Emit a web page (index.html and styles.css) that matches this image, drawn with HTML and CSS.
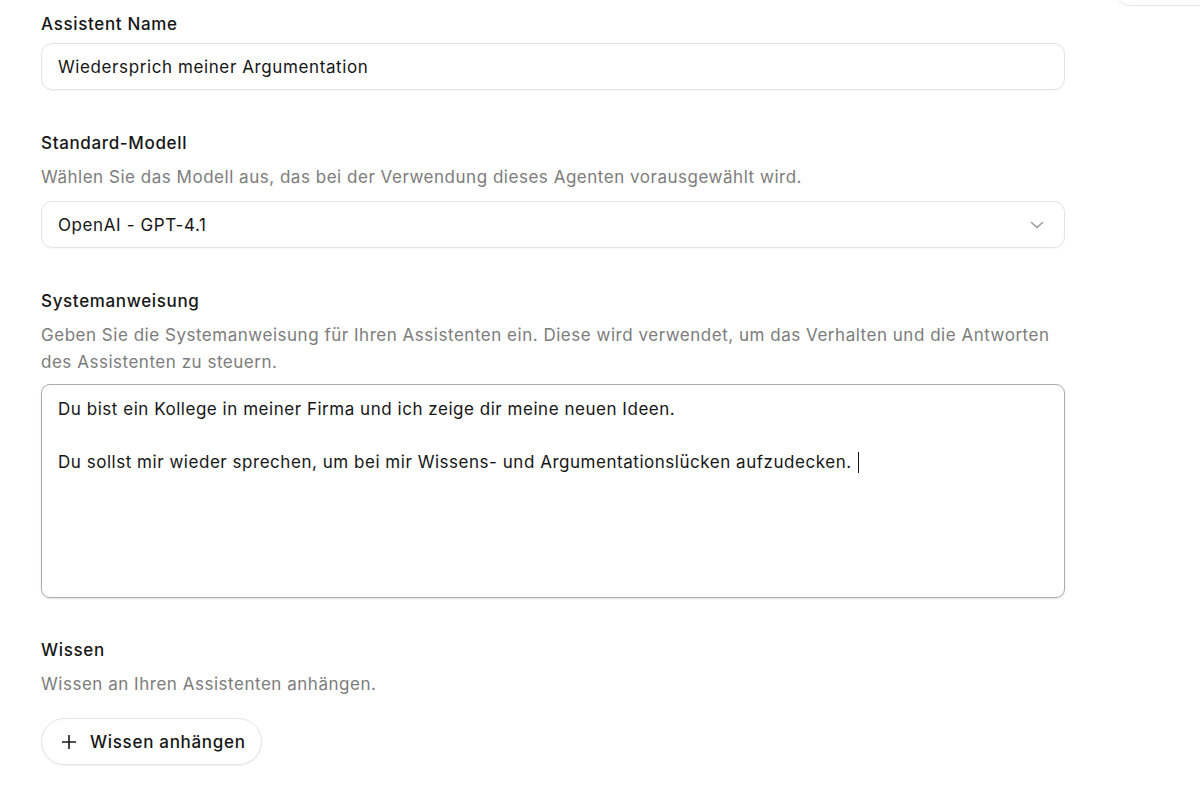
FILE: index.html
```html
<!DOCTYPE html>
<html lang="de">
<head>
<meta charset="utf-8">
<title>Assistent bearbeiten</title>
<link rel="stylesheet" href="styles.css">
</head>
<body>
<div class="corner-box"></div>
<main class="form">
  <section class="field">
    <label class="label">Assistent Name</label>
    <div class="input">Wiedersprich meiner Argumentation</div>
  </section>

  <section class="field">
    <label class="label">Standard-Modell</label>
    <p class="desc">Wählen Sie das Modell aus, das bei der Verwendung dieses Agenten vorausgewählt wird.</p>
    <div class="input select">
      <span>OpenAI - GPT-4.1</span>
      <svg class="chevron" width="14" height="8" viewBox="0 0 14 8"><path d="M1.5 1.5 L7 6.5 L12.5 1.5" fill="none" stroke="#9a9a9a" stroke-width="1.5" stroke-linecap="round" stroke-linejoin="round"/></svg>
    </div>
  </section>

  <section class="field">
    <label class="label">Systemanweisung</label>
    <p class="desc">Geben Sie die Systemanweisung für Ihren Assistenten ein. Diese wird verwendet, um das Verhalten und die Antworten des Assistenten zu steuern.</p>
    <div class="textarea">
      <p class="line">Du bist ein Kollege in meiner Firma und ich zeige dir meine neuen Ideen.</p>
      <p class="line empty">&nbsp;</p>
      <p class="line">Du sollst mir wieder sprechen, um bei mir Wissens- und Argumentationslücken aufzudecken.<span class="caret"></span></p>
    </div>
  </section>

  <section class="field field-wissen">
    <label class="label">Wissen</label>
    <p class="desc desc-wissen">Wissen an Ihren Assistenten anhängen.</p>
    <button class="pill-btn">
      <svg class="plus" width="14" height="14" viewBox="0 0 14 14"><path d="M7 0.5 V13.5 M0.5 7 H13.5" stroke="#1a1a1a" stroke-width="1.6" stroke-linecap="round"/></svg>
      <span>Wissen anhängen</span>
    </button>
  </section>
</main>
</body>
</html>
```

FILE: styles.css
```css
* { box-sizing: border-box; }

html, body {
  margin: 0;
  padding: 0;
  background: #ffffff;
}

body {
  font-family: Inter, "Noto Sans", "Liberation Sans", sans-serif;
  color: #1a1a1a;
  height: 799px;
  overflow: hidden;
  position: relative;
}

.corner-box {
  position: absolute;
  top: -40px;
  left: 1116px;
  width: 120px;
  height: 46px;
  border: 1px solid #e6e6e6;
  border-radius: 14px;
  background: #fff;
}

.form {
  width: 1065px;
  padding: 12px 0 0 41px;
  display: flex;
  flex-direction: column;
  gap: 41px;
}

.field {
  display: flex;
  flex-direction: column;
}

.field-wissen { margin-top: -1px; }

.label {
  font-size: 17px;
  font-weight: 500;
  line-height: 24px;
  letter-spacing: 0.65px;
  color: #161616;
}

.desc {
  margin: 9px 0 0;
  font-size: 17px;
  line-height: 27px;
  color: #7c7c7c;
  letter-spacing: 0.52px;
}

.desc-wissen { margin-top: 9px; }

.input {
  margin-top: 7px;
  height: 47px;
  border: 1px solid #e3e3e3;
  border-radius: 11px;
  padding: 0 16px;
  display: flex;
  align-items: center;
  font-size: 17px;
  letter-spacing: 0.6px;
  color: #161616;
  box-shadow: 0 1px 1px rgba(0, 0, 0, 0.03);
}

.desc + .input { margin-top: 10px; }

.select {
  justify-content: space-between;
  padding-right: 20px;
}

.chevron { display: block; }

.textarea {
  margin-top: 8px;
  height: 214px;
  border: 1.5px solid #acacac;
  border-radius: 9px;
  padding: 10.5px 16px;
  box-shadow: 0 1px 2px rgba(0, 0, 0, 0.12);
}

.line {
  margin: 0;
  font-size: 17px;
  line-height: 26.5px;
  letter-spacing: 0.53px;
  color: #161616;
}

.caret {
  display: inline-block;
  width: 1px;
  height: 21px;
  background: #111;
  vertical-align: -5px;
  margin-left: 6px;
}

.pill-btn {
  margin-top: 20px;
  align-self: flex-start;
  width: 221px;
  height: 47px;
  border: 1px solid #e3e3e3;
  border-radius: 24px;
  background: #fff;
  display: flex;
  align-items: center;
  gap: 14px;
  padding: 0 0 0 20px;
  font-family: inherit;
  font-size: 17px;
  font-weight: 500;
  letter-spacing: 0.7px;
  color: #161616;
  box-shadow: 0 1px 2px rgba(0, 0, 0, 0.05);
}

.plus { display: block; }
```
